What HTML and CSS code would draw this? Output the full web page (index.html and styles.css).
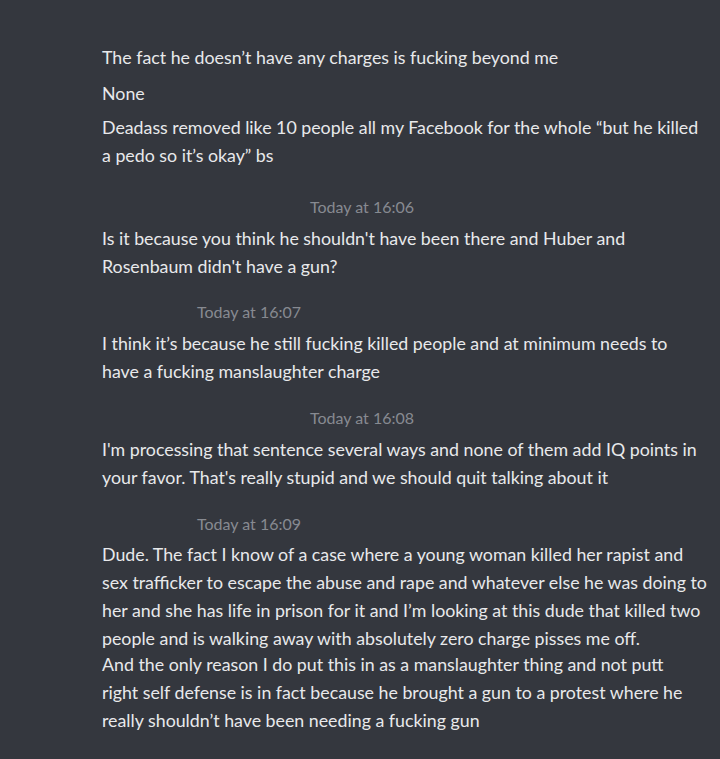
FILE: index.html
```html
<!DOCTYPE html>
<html>
<head>
<meta charset="utf-8">
<link rel="stylesheet" href="styles.css">
</head>
<body>
<div class="chat">
  <p class="msg first">The fact he doesn’t have any charges is fucking beyond me</p>
  <p class="msg gap8">None</p>
  <p class="msg gap6">Deadass removed like 10 people all my Facebook for the whole “but he killed<br>a pedo so it’s okay” bs</p>

  <div class="stamp wide gap28">Today at 16:06</div>
  <p class="msg gap7">Is it because you think he shouldn't have been there and Huber and<br>Rosenbaum didn't have a gun?</p>

  <div class="stamp narrow gap22">Today at 16:07</div>
  <p class="msg gap7">I think it’s because he still fucking killed people and at minimum needs to<br>have a fucking manslaughter charge</p>

  <div class="stamp wide gap23">Today at 16:08</div>
  <p class="msg gap7">I'm processing that sentence several ways and none of them add IQ points in<br>your favor. That's really stupid and we should quit talking about it</p>

  <div class="stamp narrow gap23">Today at 16:09</div>
  <p class="msg gap6">Dude. The fact I know of a case where a young woman killed her rapist and<br>sex trafficker to escape the abuse and rape and whatever else he was doing to<br>her and she has life in prison for it and I’m looking at this dude that killed two<br>people and is walking away with absolutely zero charge pisses me off.</p>
  <p class="msg cont">And the only reason I do put this in as a manslaughter thing and not putt<br>right self defense is in fact because he brought a gun to a protest where he<br>really shouldn’t have been needing a fucking gun</p>
</div>
</body>
</html>
```

FILE: styles.css
```css
html, body {
  margin: 0;
  padding: 0;
  background: #34373e;
}
body {
  width: 720px;
  height: 759px;
  overflow: hidden;
  font-family: Lato, "Open Sans", sans-serif;
}
.chat {
  display: flex;
  flex-direction: column;
  padding: 43px 0 0 102px;
}
.msg {
  margin: 0;
  color: #e8e9eb;
  font-size: 17.8px;
  line-height: 28px;
  white-space: nowrap;
}
.stamp {
  color: #878a91;
  font-size: 16px;
  line-height: 20px;
}
.stamp.wide { margin-left: 208px; }
.stamp.narrow { margin-left: 95px; }
.gap6 { margin-top: 6px; }
.gap7 { margin-top: 7px; }
.gap8 { margin-top: 8px; }
.gap22 { margin-top: 22px; }
.gap23 { margin-top: 23px; }
.gap28 { margin-top: 28px; }
.cont { margin-top: -2px; }
```
